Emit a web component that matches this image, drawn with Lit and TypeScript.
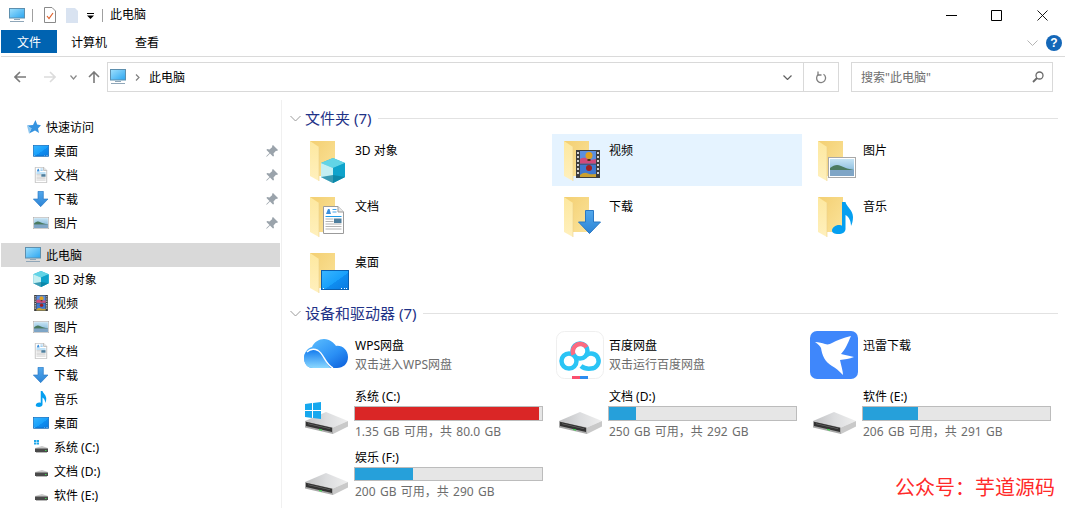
import { LitElement, html, css, svg } from "lit";
import { customElement } from "lit/decorators.js";

const FONT_DEFS = svg`
<linearGradient id="fback" x1="0" y1="0" x2="1" y2="1"><stop offset="0" stop-color="#f3cf72"/><stop offset="1" stop-color="#fbe39a"/></linearGradient>
<linearGradient id="fleaf" x1="0" y1="0" x2="0" y2="1"><stop offset="0" stop-color="#fde89f"/><stop offset="1" stop-color="#fff0bd"/></linearGradient>
<linearGradient id="screen" x1="0" y1="0" x2="1" y2="1"><stop offset="0" stop-color="#39b6ff"/><stop offset="0.55" stop-color="#18a0fb"/><stop offset="0.56" stop-color="#0f8df0"/><stop offset="1" stop-color="#0a7ae0"/></linearGradient>
<linearGradient id="pc" x1="0" y1="0" x2="1" y2="1"><stop offset="0" stop-color="#9fe0fd"/><stop offset="1" stop-color="#2aa5f0"/></linearGradient>
<linearGradient id="arrow" x1="0" y1="0" x2="0" y2="1"><stop offset="0" stop-color="#52a8ec"/><stop offset="1" stop-color="#2c84d6"/></linearGradient>
<linearGradient id="top" x1="0" y1="0" x2="1" y2="0"><stop offset="0" stop-color="#c0c1c3"/><stop offset="0.5" stop-color="#dcdddf"/><stop offset="1" stop-color="#eeeeee"/></linearGradient>
<linearGradient id="sky" x1="0" y1="0" x2="0" y2="1"><stop offset="0" stop-color="#c6e4f5"/><stop offset="0.5" stop-color="#9cc8e4"/><stop offset="1" stop-color="#5a90b8"/></linearGradient>
<linearGradient id="wps" x1="0" y1="0" x2="1" y2="1"><stop offset="0" stop-color="#62c4ff"/><stop offset="0.6" stop-color="#2b90f5"/><stop offset="1" stop-color="#0b5cd8"/></linearGradient>
<linearGradient id="wpsb" x1="0" y1="0" x2="0" y2="1"><stop offset="0" stop-color="#0f78ee"/><stop offset="1" stop-color="#8ad8ff"/></linearGradient>
`;

const cube = svg`
<path d="M12 0 24 5v14l-12 6L0 19V5z" fill="#2bb3d6"/>
<path d="M12 0 24 5 12 10 0 5z" fill="#62d4e6"/>
<path d="M0 5l12 5v15L0 19z" fill="#c4eff2"/>
<path d="M24 5v14l-12 6V10z" fill="#0fa3cb"/>
<path d="M12 17 24 19l-12 6L0 19z" fill="#0c7f9e" opacity=".75"/>`;

const doc = svg`
<path d="M.5.5H15L20.5 6v21.5H.5z" fill="#fff" stroke="#9b9b9b"/>
<path d="M15 .5V6h5.500" fill="#e8e8e8" stroke="#9b9b9b"/>
<path d="M3 8 5 3h1.500l1.500 5z" fill="#3a8fdc"/>
<path d="M9.500 3.500h4M9.500 6h4" stroke="#46a3e6"/>
<path d="M2.500 10.500h16" stroke="#1f9be8"/>
<path d="M2.500 13h8M2.500 15.500h8M2.500 18h16M2.500 20.500h16M2.500 23h16" stroke="#b4b4b4"/>
<rect x="11" y="12.500" width="7.500" height="4.500" fill="#4f7f9e"/>`;

const desk = svg`
<rect x=".5" y=".5" width="27" height="19" fill="url(#screen)" stroke="#0a5fb0"/>
<path d="M1 19h26v1H1z" fill="#0a5fb0"/>
<path d="M2 18.500h1M20 18.500h1M23 18.500h1M25 18.500h1" stroke="#fff"/>`;

const pic = svg`
<rect x=".5" y=".5" width="27" height="20" fill="#fff" stroke="#a8a8a8"/>
<rect x="2" y="2" width="24" height="17" fill="url(#sky)"/>
<path d="M2 11c4-3 7-4 11-2 4 2 8 3 13 4v1H2z" fill="#4a7a60"/>
<path d="M2 13h24v6H2z" fill="#7fa5c6"/>`;

const down = svg`
<path d="M7.500.5h8V12h7L11.500 23.500.5 12h7z" fill="url(#arrow)" stroke="#2a78c4"/>`;

const note = svg`
<path d="M10 0h3.500c.5 4 7.500 8 7.500 15 0 4-1 7-2 9 0-5-2-9-5.500-11V27c0 3-3 5-7 5C2 32 0 30.500 0 28.500 0 25.500 3.500 23 7 23c1.500 0 2.400.3 3 .8z" fill="#059ff0"/>`;

const film = svg`
<rect width="24" height="28" fill="#3d3d3d"/>
<rect x="4" y="1" width="16" height="12.500" fill="#5b8fe0"/>
<rect x="4" y="14.500" width="16" height="12.500" fill="#3f78cf"/>
<path d="M4 9c3-2 6-1 8 0s5 1 8 0v4.500H4z" fill="#d04a7a"/>
<circle cx="13" cy="5.500" r="3.500" fill="#e0a020"/><path d="M11.500 9h3v2h-3z" fill="#50301a"/>
<circle cx="13" cy="18" r="3" fill="#a02020"/>
<path d="M4 25c3-2 5-3 8-1.500s5 .5 8 .5v3H4z" fill="#caa030"/>
<path d="M1 2h2v2H1zM1 6h2v2H1zM1 10h2v2H1zM1 14h2v2H1zM1 18h2v2H1zM1 22h2v2H1zM21 2h2v2h-2zM21 6h2v2h-2zM21 10h2v2h-2zM21 14h2v2h-2zM21 18h2v2h-2zM21 22h2v2h-2z" fill="#d5d5d5"/>`;

const folder = (inner: unknown, x: number, y: number) => svg`
<svg class="big" viewBox="0 0 48 48">
  <path d="M4 3h25v35H13L4 36z" fill="url(#fback)"/>
  <path d="M4 3l9 6v34l-9-5z" fill="url(#fleaf)"/>
  <path d="M13 9v34" stroke="#ecd089" stroke-width=".6"/>
  <g transform="translate(${x} ${y})">${inner}</g>
</svg>`;

const pc = svg`
<rect x=".5" y=".5" width="15" height="10.500" fill="url(#pc)" stroke="#5d8fae"/>
<path d="M5 12.500h6M1 14.500h14" stroke="#8fa6b8"/>`;

const small = (inner: unknown, w: number, h: number) => svg`
<svg class="ico" viewBox="0 0 ${w} ${h}">${inner}</svg>`;

const hdd = (win = false) => svg`
<g>
  <path d="M1 32 22 23l22 9-15 6.500z" fill="url(#top)"/>
  <path d="M1 32 29 38.500V45L1 38.500z" fill="#a8a8a8"/>
  <path d="M2 32.800 28 38.800V43L2 37z" fill="#333"/>
  <path d="M4 34.500 26 39.500V40L4 35z" fill="#777"/>
  <path d="M29 38.500 44 32v5.500L29 45z" fill="#c9c9c9"/>
  <path d="M15 39.800l3 .7v1.300l-3-.7z" fill="#3fd04f"/>
  ${win ? svg`<path d="M1 15l7-1v7H1zM9 14l8-1v8H9zM1 22h7v7l-7-1zM9 22h8v8l-8-1z" fill="#16a8ee"/>` : ""}
</g>`;

const smallHdd = (win = false) => svg`
<svg class="ico" viewBox="0 0 16 16">
  ${win ? svg`<path d="M1 1h2v2H1zM3.500 1H6v2H3.500zM1 3.500h2v2H1zM3.500 3.500H6v2H3.500z" fill="#1ea7ea"/>` : ""}
  <path d="M2 9l7-2 6 2-1 1H3z" fill="#c9c9c9"/>
  <path d="M2 9.500h13V13H2z" fill="#4a4a4a"/>
  <path d="M3 13.500h11" stroke="#b8b8b8"/>
  <rect x="12" y="11" width="1.500" height="1" fill="#3fd04f"/>
</svg>`;

const sideItems = [
  { k: "head", t: "快速访问", i: svg`<svg class="ico" viewBox="0 0 16 16"><path d="M10.500 1 12.200 5.500 16 6.200 13 9.400 14 14 10 11.500 4 14.500 6.500 9.500 2 6.500 8 6z" fill="#3593e0"/><path d="M2 6.500 6.500 9.500 4 14.500z" fill="#8cc6f0"/></svg>` },
  { t: "桌面", pin: 1, i: small(desk, 28, 21) },
  { t: "文档", pin: 1, i: small(doc, 21, 28) },
  { t: "下载", pin: 1, i: small(down, 24, 24) },
  { t: "图片", pin: 1, i: small(pic, 28, 21) },
  { k: "gap" },
  { k: "head sel", t: "此电脑", i: small(pc, 16, 16) },
  { t: "3D 对象", i: small(cube, 24, 25) },
  { t: "视频", i: small(film, 24, 28) },
  { t: "图片", i: small(pic, 28, 21) },
  { t: "文档", i: small(doc, 21, 28) },
  { t: "下载", i: small(down, 24, 24) },
  { t: "音乐", i: small(note, 21, 32) },
  { t: "桌面", i: small(desk, 28, 21) },
  { t: "系统 (C:)", i: smallHdd(true) },
  { t: "文档 (D:)", i: smallHdd() },
  { t: "软件 (E:)", i: smallHdd() },
];

const folders = [
  { t: "3D 对象", i: folder(cube, 15, 20) },
  { t: "视频", sel: 1, i: folder(film, 16, 12) },
  { t: "图片", i: folder(pic, 14, 19) },
  { t: "文档", i: folder(doc, 17, 12) },
  { t: "下载", i: folder(down, 18, 16) },
  { t: "音乐", i: folder(note, 18, 8) },
  { t: "桌面", i: folder(desk, 15, 20) },
];

const wpsLogo = svg`<svg class="big" viewBox="0 0 48 48">
  <path d="M9 37C3 37 0 32 0 27 0 21 4 17 8 16 10 11 15 8 20 8 26 8 30 12 32 15 38 14 44 19 44 26 44 33 39 37 33 37z" fill="url(#wps)"/>
  <path d="M0 27C0 22 4 18 9 18 14 18 17 22 20 27 22 31 24 35 27 37H9C3 37 0 32 0 27z" fill="url(#wpsb)"/>
  <path d="M3 21C6 18 10 17.500 14 19.500 20 23 21 33 29 37" fill="none" stroke="#fff" stroke-width="1.400"/>
</svg>`;

const baiduLogo = svg`<svg class="big" viewBox="0 0 48 48">
  <rect x=".5" y=".5" width="47" height="47" rx="8" fill="#fff" stroke="#efefef"/>
  <circle cx="13" cy="30" r="7.500" fill="none" stroke="#2bc4f5" stroke-width="4.500"/>
  <path d="M25 35c3 2.500 6 3 10 2.500a7.500 7.500 0 1 0-5-13" fill="none" stroke="#2bc4f5" stroke-width="4.500"/>
  <circle cx="24" cy="20" r="7.500" fill="none" stroke="#2bc4f5" stroke-width="4.500"/>
  <path d="M17.500 23.700A7.500 7.500 0 0 1 30.500 16.300" fill="none" stroke="#fb6a80" stroke-width="4.500"/>
  <path d="M16 45h8v3h-8z" fill="#fb4f6e"/><path d="M24 45h8v3h-8z" fill="#2d8cf0"/>
</svg>`;

const xunleiLogo = svg`<svg class="big" viewBox="0 0 48 48">
  <rect width="48" height="48" rx="7" fill="#3f87fb"/>
  <path d="M5 11C9 11 12 12 15 13 18 14 20 13 22 12 27 9 33 7 41 5 38 12 35 19 31 23 35 24 40 25 44 26 39 28 35 28 30 29 31 34 33 40 33 44 29 40 26 37 22 35 15 31 12 24 11 17 10 15 8 13 5 11z" fill="#fff"/>
</svg>`;

const tiles = [
  { t: "WPS网盘", s: "双击进入WPS网盘", i: wpsLogo },
  { t: "百度网盘", s: "双击运行百度网盘", i: baiduLogo },
  { t: "迅雷下载", i: xunleiLogo },
];

const drives = [
  { t: "系统 (C:)", pct: 98.3, full: 1, s: "1.35 GB 可用，共 80.0 GB", win: true },
  { t: "文档 (D:)", pct: 14.4, s: "250 GB 可用，共 292 GB" },
  { t: "软件 (E:)", pct: 29.2, s: "206 GB 可用，共 291 GB" },
  { t: "娱乐 (F:)", pct: 31.2, s: "200 GB 可用，共 290 GB" },
];

const chevron = html`<svg class="chev" viewBox="0 0 11 7"><path d="M.5 1 5.500 6 10.500 1" fill="none" stroke="#9a9a9a"/></svg>`;

@customElement("app-root")
export class AppRoot extends LitElement {
  static styles = css`
    :host {
      display: block;
      position: relative;
      width: 1065px;
      height: 508px;
      overflow: hidden;
      background: #fff;
      color: #000;
      font: 12px/16px "Noto Sans", "Noto Sans CJK SC", sans-serif;
    }
    .defs { position: absolute; width: 0; height: 0; }
    svg { display: block; flex: none; }
    .title { display: flex; align-items: center; height: 30px; }
    .qa { display: flex; align-items: center; padding-left: 9px; }
    .qa-pc { width: 16px; height: 14px; }
    .vsep { width: 1px; height: 13px; background: #a0a0a0; margin: 0 11px 0 7px; }
    .qa-doc { width: 12px; height: 16px; }
    .qa-blank { width: 12px; height: 15px; margin-left: 10px; }
    .qa-drop { width: 7px; height: 6px; margin: 2px 8px 0 9px; }
    .qa .vsep.b { margin: 0 7px 0 0; }
    .win { margin-left: auto; display: flex; }
    .win button { width: 46px; height: 30px; padding: 0; border: 0; background: none; display: flex; align-items: center; justify-content: center; }
    .win button.min { width: 44px; }
    .win svg { width: 11px; height: 11px; }
    .ribbon { display: flex; align-items: center; height: 23px; margin-left: 1px; }
    .tab { height: 23px; line-height: 25px; padding: 0 14px; }
    .tab.file { width: 56px; box-sizing: border-box; text-align: center; padding: 0; background: #0063b1; color: #fff; }
    .ribbon .right { margin-left: auto; display: flex; align-items: center; gap: 8px; padding: 2px 3px 0 0; }
    .ribbon .chev2 { width: 11px; height: 6px; }
    .help { width: 16px; height: 16px; border-radius: 50%; background: #1467b8; color: #fff; font: bold 12px/16px "Liberation Sans", sans-serif; text-align: center; }
    .rule { height: 1px; margin: 3px 0 0 1px; background: #dadada; }
    .nav { display: flex; align-items: center; height: 30px; margin-top: 5px; padding-right: 12px; }
    .nav span { margin-top: 2px; }
    .nav-btns { display: flex; align-items: center; width: 107px; flex: none; }
    .nav-btns svg { width: 12px; height: 12px; }
    .nav-btns .b1 { margin-left: 14px; }
    .nav-btns .b2 { margin-left: 18px; }
    .nav-btns .b3 { margin-left: 14px; width: 7px; height: 5px; }
    .nav-btns .b4 { margin-left: 11px; }
    .addr { flex: 1; height: 30px; box-sizing: border-box; border: 1px solid #d9d9d9; display: flex; align-items: center; }
    .addr .pcbig { width: 16px; height: 16px; margin-left: 2px; }
    .addr .gt { width: 5px; height: 7px; margin: 0 9px 0 9px; }
    .addr .cell { width: 34px; height: 28px; border-left: 1px solid #d9d9d9; display: flex; align-items: center; justify-content: center; flex: none; }
    .addr .dropcell { margin-left: auto; border-left: 0; width: 32px; }
    .addr .dropcell svg { width: 9px; height: 5px; }
    .addr .cell svg.ref { width: 12px; height: 13px; }
    .search { width: 202px; height: 30px; margin-left: 12px; box-sizing: border-box; border: 1px solid #d9d9d9; display: flex; align-items: center; padding: 0 8px 0 9px; color: #6d6d6d; flex: none; }
    .search svg { width: 12px; height: 12px; margin-left: auto; }
    .main { display: flex; height: 416px; margin-top: 8px; }
    .side { width: 282px; box-sizing: border-box; border-right: 1px solid #f0f0f0; padding-top: 15px; flex: none; margin-right: 6px; }
    .sitem { display: flex; align-items: center; height: 24px; padding-left: 32px; margin: 0 1px; }
    .sitem .ico { width: 16px; height: 16px; margin-right: 5px; }
    .sitem .label { flex: 1; margin-top: 2px; }
    .sitem.head { padding-left: 24px; }
    .sitem.sel { background: #d9d9d9; }
    .sitem.gap { height: 8px; }
    .sitem .pin { width: 12px; height: 12px; margin-right: 2px; }
    .content { flex: 1; padding: 8px 7px 0 0; min-width: 0; }
    .group { display: flex; align-items: center; height: 20px; color: #1e3287; font-size: 15px; line-height: 20px; margin-left: 2px; }
    .group .chev { width: 11px; height: 7px; margin-right: 4px; }
    .group .line { flex: 1; height: 1px; background: #e2e2e2; margin-left: 7px; }
    .grid { display: grid; grid-template-columns: repeat(3, 250px); column-gap: 4px; margin-left: 10px; }
    .folders { row-gap: 4px; margin-top: 6px; margin-bottom: 5px; grid-auto-rows: 52px; }
    .tile { display: flex; padding-left: 8px; }
    .tile.sel { background: #e5f3ff; }
    .big { width: 48px; height: 48px; margin-right: 1px; }
    .folders .big { margin-top: 4px; }
    .folders .name { padding-top: 9px; }
    .devices { margin-top: 8px; row-gap: 8px; grid-template-rows: 48px 53px 52px; }
    .info { display: flex; flex-direction: column; min-width: 0; }
    .tile.app .big { margin-left: -4px; margin-right: 5px; }
    .tile.app:first-child .big { margin-left: -2px; margin-right: 3px; }
    .tile.app .name { padding-top: 7px; }
    .sub { color: #6d6d6d; margin-top: 3px; }
    .tile.drive .big { margin: 2px 2px 0 -2px; }
    .tile.drive .info { width: 189px; }
    .tile.drive .name { padding: 2px 0 0 1px; }
    .tile.drive .sub { padding-left: 1px; margin-top: 2px; word-spacing: 1.2px; }
    .bar { height: 15px; box-sizing: border-box; border: 1px solid #bcbcbc; background: #e6e6e6; margin: 1px 0 1px; }
    .fill { height: 100%; background: #26a0da; }
    .fill.full { background: #da2626; }
    .stamp { position: absolute; left: 895px; top: 474px; font-size: 20px; line-height: 28px; color: #ff2a2a; white-space: pre; }
  `;

  render() {
    return html`
      <svg class="defs"><defs>${FONT_DEFS}</defs></svg>
      <div class="title">
        <div class="qa">
          <svg class="qa-pc" viewBox="0 0 16 14"><rect x=".5" y=".5" width="15" height="9.500" fill="url(#pc)" stroke="#5d8fae"/><path d="M5 11.500h6M1 13.500h14" stroke="#8fa6b8"/></svg>
          <div class="vsep"></div>
          <svg class="qa-doc" viewBox="0 0 12 16"><path d="M.5.500H8L11.500 4v11.500H.5z" fill="#fff" stroke="#8a8a8a"/><path d="M3 9l2 2.500L9 6" fill="none" stroke="#e0602a" stroke-width="1.200"/></svg>
          <svg class="qa-blank" viewBox="0 0 12 15"><path d="M0 0h9l3 3v12H0z" fill="#d9e3f1"/></svg>
          <svg class="qa-drop" viewBox="0 0 7 6"><path d="M0 0h7v1H0zM0 2.500h7L3.500 6z"/></svg>
          <div class="vsep b"></div>
          <span>此电脑</span>
        </div>
        <div class="win">
          <button class="min" aria-label="min"><svg viewBox="0 0 11 11"><path d="M0 5.500h11" stroke="#000"/></svg></button>
          <button aria-label="max"><svg viewBox="0 0 11 11"><path d="M.5.500h10v10H.5z" fill="none" stroke="#000"/></svg></button>
          <button aria-label="close"><svg viewBox="0 0 11 11"><path d="M.5.500l10 10M10.500.500l-10 10" stroke="#000" stroke-width=".9"/></svg></button>
        </div>
      </div>
      <div class="ribbon">
        <div class="tab file">文件</div>
        <div class="tab">计算机</div>
        <div class="tab">查看</div>
        <div class="right">
          <svg class="chev2" viewBox="0 0 11 6"><path d="M.5.500l5 5 5-5" fill="none" stroke="#b5b5b5"/></svg>
          <div class="help">?</div>
        </div>
      </div>
      <div class="rule"></div>
      <div class="nav">
        <div class="nav-btns">
          <svg class="b1" viewBox="0 0 12 12"><path d="M12 6H1.500M6 1 1 6l5 5" fill="none" stroke="#7a7a7a" stroke-width="1.600"/></svg>
          <svg class="b2" viewBox="0 0 12 12"><path d="M0 6h10.500M6 1l5 5-5 5" fill="none" stroke="#dcdcdc" stroke-width="1.600"/></svg>
          <svg class="b3" viewBox="0 0 7 5"><path d="M.5.500 3.500 4l3-3.500" fill="none" stroke="#8a8a8a" stroke-width="1.200"/></svg>
          <svg class="b4" viewBox="0 0 12 12"><path d="M6 12V1.500M1 6l5-5 5 5" fill="none" stroke="#7a7a7a" stroke-width="1.600"/></svg>
        </div>
        <div class="addr">
          <svg class="pcbig" viewBox="0 0 16 16">${pc}</svg>
          <svg class="gt" viewBox="0 0 5 7"><path d="M1 .5l3 3-3 3" fill="none" stroke="#808080" stroke-width="1.200"/></svg>
          <span>此电脑</span>
          <div class="cell dropcell"><svg viewBox="0 0 9 5"><path d="M.5.500l4 4 4-4" fill="none" stroke="#606060" stroke-width="1.200"/></svg></div>
          <div class="cell"><svg class="ref" viewBox="0 0 12 13"><path d="M8.500 3.300A4.500 4.500 0 1 1 3.400 3.500" fill="none" stroke="#808080" stroke-width="1.300"/><path d="M3 .5v3.500h3.500" fill="none" stroke="#808080" stroke-width="1.300"/></svg></div>
        </div>
        <div class="search">
          <span>搜索"此电脑"</span>
          <svg viewBox="0 0 12 12"><circle cx="7.500" cy="4.500" r="3.500" fill="none" stroke="#6a6a6a" stroke-width="1.300"/><path d="M5 7l-4 4" stroke="#6a6a6a" stroke-width="1.800"/></svg>
        </div>
      </div>
      <div class="main">
        <div class="side">
          ${sideItems.map((s) => s.k === "gap"
            ? html`<div class="sitem gap"></div>`
            : html`<div class="sitem ${s.k ?? ""}">
                ${s.i}
                <span class="label">${s.t}</span>
                ${s.pin ? html`<svg class="pin" viewBox="0 0 12 12"><path d="M7 0l5 5-1 1-1-.3L7.500 8.500 8 11 7 11.500 4 8.500.7 11.800l-.5-.5L3.500 8 .5 5l.5-1 2.500.5L6.300 2 6 1z" fill="#9aa3ab"/></svg>` : ""}
              </div>`)}
        </div>
        <div class="content">
          <div class="group">${chevron}<span>文件夹 (7)</span><div class="line"></div></div>
          <div class="grid folders">
            ${folders.map((f) => html`<div class="tile ${f.sel ? "sel" : ""}">${f.i}<div class="name">${f.t}</div></div>`)}
          </div>
          <div class="group">${chevron}<span>设备和驱动器 (7)</span><div class="line"></div></div>
          <div class="grid devices">
            ${tiles.map((t) => html`<div class="tile app">${t.i}<div class="info"><div class="name">${t.t}</div>${t.s ? html`<div class="sub">${t.s}</div>` : ""}</div></div>`)}
            ${drives.map((d) => html`<div class="tile drive">
              <svg class="big" viewBox="0 0 48 48">${hdd(d.win)}</svg>
              <div class="info">
                <div class="name">${d.t}</div>
                <div class="bar"><div class="fill ${d.full ? "full" : ""}" style="width:${d.pct}%"></div></div>
                <div class="sub">${d.s}</div>
              </div>
            </div>`)}
          </div>
        </div>
      </div>
      <div class="stamp">公众号：芋道源码</div>
    `;
  }
}
